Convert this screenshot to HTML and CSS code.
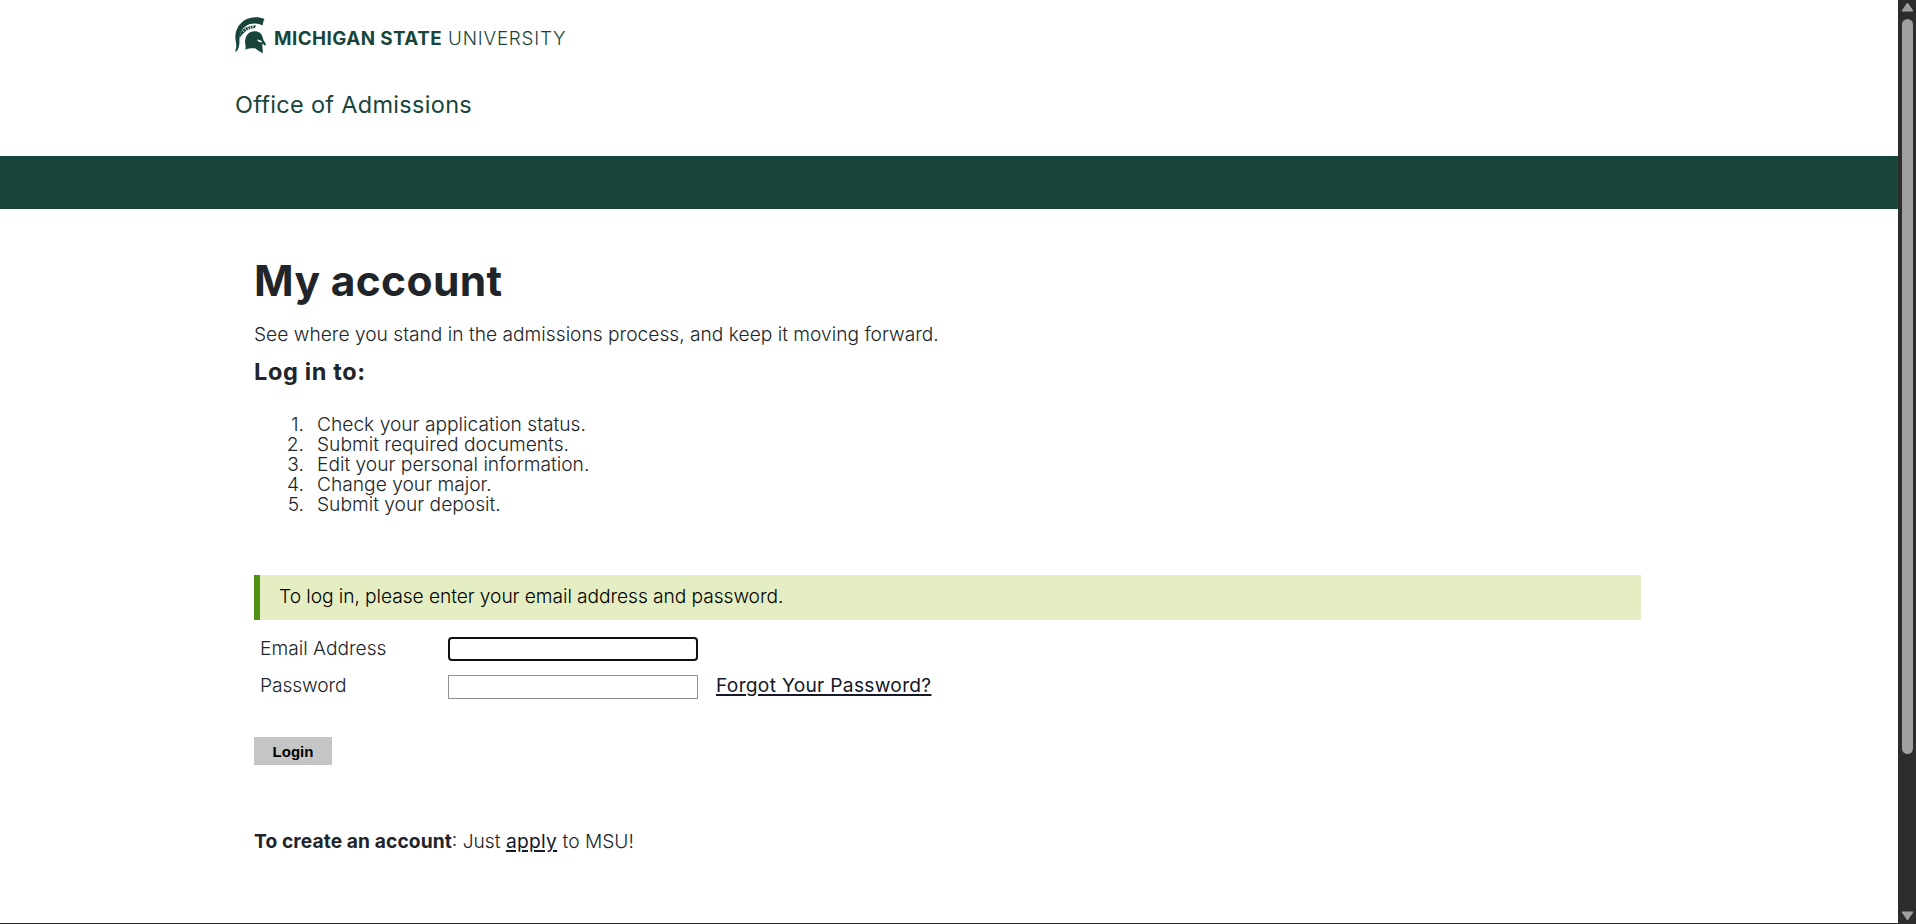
FILE: index.html
```
<!DOCTYPE html>
<html lang="en">
<head>
<meta charset="utf-8">
<title>My account</title>
<link rel="stylesheet" href="styles.css">
</head>
<body>
<div class="page">
  <header class="masthead">
    <div class="brand">
      <svg class="helmet" viewBox="0 0 96 112" fill="#18453b">
        <path d="M89 6C70-2 43-1 25 12C6 26-1 47 1 69C4 82 5 91 0 104L3 105C11 98 13 87 13 74C12 50 23 29 43 22C58 18 73 19 83 26C84 18 86 11 89 6Z"/>
        <path d="M14 63C15 45 26 32 41 29C50 26 57 27 64 25L59 33C41 36 26 43 14 63Z"/>
        <path d="M23 41l6 6M30 34l5 8M38 30l3 8M46 28l1 8M54 27l-1 7" stroke="#fff" stroke-width="2.5"/>
        <path d="M31 99C32 92 32 87 30 79C29 57 41 43 59 43C73 43 80 50 83 60C86 70 89 76 94 84L88 86L84 80L82 84L84 110C76 105 68 101 62 95C50 94 41 95 31 99Z"/>
        <path d="M66 69C71 69 79 70 82 76C80 79 71 77 66 69Z" fill="#fff"/>
        <path d="M84 57l3 14" stroke="#fff" stroke-width="2"/>
      </svg>
      <div class="wordmark"><b class="michigan">MICHIGAN STATE</b><span class="university">UNIVERSITY</span></div>
    </div>
    <div class="office">Office of Admissions</div>
  </header>
  <div class="band"></div>
  <main class="content">
    <h1 class="title">My account</h1>
    <p class="intro">See where you stand in the admissions process, and keep it moving forward.</p>
    <h2 class="subtitle">Log in to:</h2>
    <ol class="tasks">
      <li>Check your application status.</li>
      <li>Submit required documents.</li>
      <li>Edit your personal information.</li>
      <li>Change your major.</li>
      <li>Submit your deposit.</li>
    </ol>
    <div class="notice">To log in, please enter your email address and password.</div>
    <form class="login">
      <div class="row"><label class="label" for="email">Email Address</label><input class="field field-focus" id="email" type="text"></div>
      <div class="row"><label class="label label-password" for="password">Password</label><input class="field" id="password" type="password"><a class="link forgot" href="#">Forgot Your Password?</a></div>
      <button class="submit" type="button">Login</button>
    </form>
    <p class="create"><b class="create-lead">To create an account</b>: Just <a class="link apply" href="#">apply</a> to MSU!</p>
  </main>
</div>
<div class="scrollbar">
  <svg class="arrow" viewBox="0 0 13 10"><path d="M6.5 1L12 9H1Z" fill="#9f9f9f" stroke="#9f9f9f" stroke-linejoin="round"/></svg>
  <div class="thumb"></div>
  <svg class="arrow" viewBox="0 0 13 10"><path d="M6.5 9L1 1H12Z" fill="#9f9f9f" stroke="#9f9f9f" stroke-linejoin="round"/></svg>
</div>
</body>
</html>
```

FILE: styles.css
```
* { box-sizing: border-box; }
body { margin: 0; height: 924px; overflow: hidden; display: flex; background: #fff; color: #212529; font: 300 19.2px/20px Inter, sans-serif; }
.page { flex: 1; height: 924px; border-bottom: 1px solid #2c2c2c; }
.masthead { height: 156px; padding: 17px 0 0 235px; color: #18453b; }
.brand { display: flex; gap: 7px; height: 38px; }
.helmet { width: 32px; height: 37px; }
.wordmark { display: flex; gap: 6px; font-size: 18.8px; line-height: 24px; padding-top: 10px; }
.michigan { font-weight: 700; letter-spacing: .45px; white-space: nowrap; }
.university { font-weight: 300; letter-spacing: .8px; }
.office { margin-top: 34px; font-size: 23.5px; font-weight: 400; line-height: 32px; letter-spacing: .3px; }
.band { height: 53px; background: #18453b; }
.content { width: 1387px; margin-left: 254px; padding-top: 44px; }
.title { margin: 0; height: 56px; font-size: 42.5px; font-weight: 700; line-height: 56px; letter-spacing: .35px; }
.intro { margin: 15px 0 0; }
.subtitle { margin: 13px 0 0; font-size: 23.5px; font-weight: 700; line-height: 30px; letter-spacing: .65px; }
.tasks { margin: 27px 0 0; padding-left: 63px; }
.tasks li::marker { content: counter(list-item) ".\2002\2009"; font-variant-numeric: normal; }
.notice { height: 45px; margin-top: 61px; padding: 11px 0 0 19px; border-left: 6px solid #519214; background: #e5eec2; color: #000; letter-spacing: -.07px; }
.login { padding-top: 17px; }
.row { display: flex; height: 24px; margin-bottom: 14px; align-items: center; }
.label { width: 188px; height: 24px; margin-left: 6px; line-height: 22px; }
.label-password { line-height: 20px; letter-spacing: -.1px; }
.field { width: 250px; height: 24px; padding: 0; border: 1px solid #919191; background: #fff; outline: none; }
.field-focus { border: 2px solid #101010; border-radius: 4px; }
.link { color: #151827; font-weight: 400; text-decoration: underline; text-decoration-thickness: 2px; text-underline-offset: 2px; }
.forgot { height: 24px; margin-left: 18px; line-height: 20px; letter-spacing: .28px; }
.submit { display: block; width: 78px; height: 28px; margin-top: 38px; padding: 0; border: 0; background: #c5c5c5; color: #000; font: bold 15px "Liberation Sans", sans-serif; }
.create { margin: 66px 0 0; }
.create-lead { font-weight: 700; letter-spacing: .1px; }
.apply { letter-spacing: .3px; }
.scrollbar { width: 18px; height: 924px; padding: 2px 0 3px; background: #2c2c2c; display: flex; flex-direction: column; align-items: center; }
.arrow { width: 13px; height: 10px; }
.thumb { width: 11px; height: 735px; margin: 7px 0 auto; border-radius: 6px; background: #9f9f9f; }
```
